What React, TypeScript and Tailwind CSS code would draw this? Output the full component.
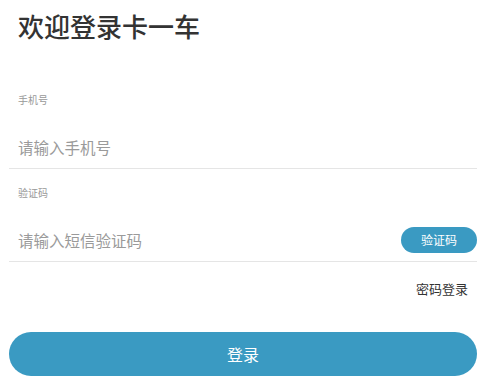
import React, { useState } from 'react';

const App: React.FC = () => {
  const [phone, setPhone] = useState('');
  const [code, setCode] = useState('');

  return (
    <div className="w-[483px] h-[381px] bg-white pl-[9px] pr-[6px] font-['Noto_Sans_CJK_SC',sans-serif]">
      <h1 className="pl-[9px] pt-[8px] text-[26px] leading-[36px] font-medium text-[#333]">欢迎登录卡一车</h1>

      <div className="mt-[49px]">
        <div className="pl-[9px] text-[10px] leading-[14px] text-[#999]">手机号</div>
        <input
          value={phone}
          onChange={(e) => setPhone(e.target.value)}
          placeholder="请输入手机号"
          className="block w-full h-[43px] mt-[19px] pl-[9px] text-[15.5px] text-[#333] placeholder:text-[#9a9a9a] outline-none border-b border-[#e5e5e5]"
        />
      </div>

      <div className="mt-[17px]">
        <div className="pl-[9px] text-[10px] leading-[14px] text-[#999]">验证码</div>
        <div className="flex items-center h-[43px] mt-[19px] border-b border-[#e5e5e5]">
          <input
            value={code}
            onChange={(e) => setCode(e.target.value)}
            placeholder="请输入短信验证码"
            className="flex-1 min-w-0 h-full pl-[9px] text-[15.5px] text-[#333] placeholder:text-[#9a9a9a] outline-none"
          />
          <button className="w-[76px] h-[26px] rounded-full bg-[#3a9ac2] text-white text-[12px] leading-none">
            验证码
          </button>
        </div>
      </div>

      <div className="flex justify-end pr-[9px] mt-[18px]">
        <span className="text-[13px] leading-[18px] text-[#333]">密码登录</span>
      </div>

      <button className="mt-[34px] w-full h-[44px] rounded-full bg-[#3a9ac2] text-white text-[16px]">
        登录
      </button>
    </div>
  );
};

export default App;
